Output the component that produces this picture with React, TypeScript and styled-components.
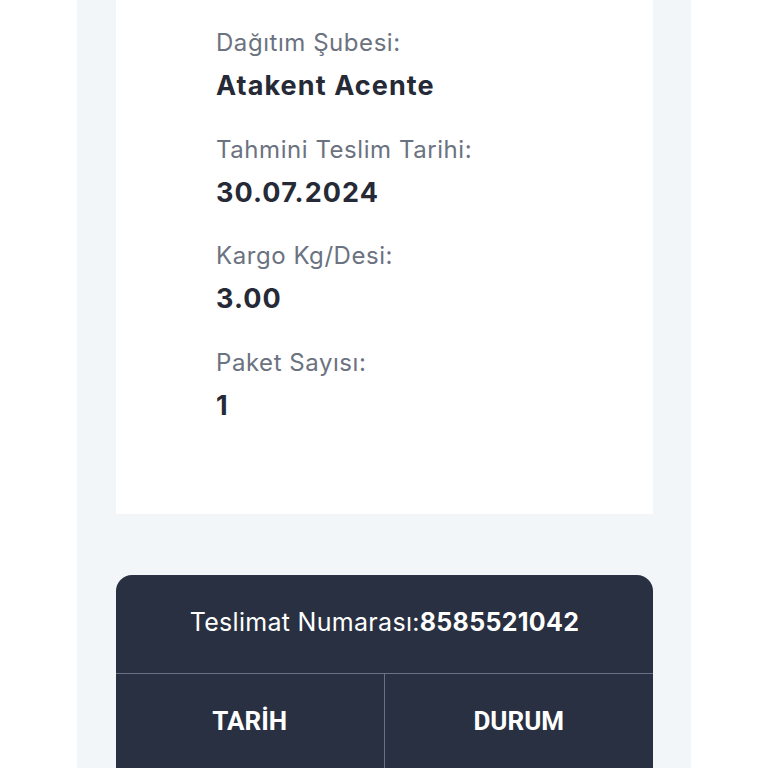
import React from "react";
import styled, { createGlobalStyle } from "styled-components";

const Global = createGlobalStyle`
  html, body {
    margin: 0;
    padding: 0;
    background: #ffffff;
  }
  body {
    font-family: "Inter", "Noto Sans", sans-serif;
    -webkit-font-smoothing: antialiased;
  }
  * { box-sizing: border-box; }
`;

const Page = styled.div`
  display: flex;
  padding-left: 77px;
  height: 768px;
  overflow: hidden;
`;

const Panel = styled.div`
  width: 614px;
  background: #f3f6f9;
  padding: 0 38px 0 39px;
  display: flex;
  flex-direction: column;
  gap: 61px;
`;

const InfoCard = styled.section`
  background: #ffffff;
  padding: 28px 24px 91px 100px;
  display: flex;
  flex-direction: column;
  gap: 31.5px;
`;

const Field = styled.div`
  display: flex;
  flex-direction: column;
  gap: 11px;
`;

const Label = styled.div`
  font-size: 24px;
  line-height: 30px;
  letter-spacing: 0.55px;
  color: #6b7280;
  font-weight: 400;
`;

const Value = styled.div`
  font-size: 27px;
  line-height: 34px;
  letter-spacing: 1.1px;
  color: #252a36;
  font-weight: 700;
`;

const TrackCard = styled.section`
  background: #283041;
  border-radius: 16px 16px 0 0;
  color: #ffffff;
  flex: 1;
  display: flex;
  flex-direction: column;
`;

const TrackHeader = styled.div`
  height: 99px;
  display: flex;
  align-items: center;
  justify-content: center;
  padding-bottom: 4px;
  font-size: 25px;
  letter-spacing: 0.3px;
  border-bottom: 1px solid #687185;
`;

const Number = styled.span`
  font-weight: 700;
`;

const Columns = styled.div`
  display: grid;
  grid-template-columns: 1fr 1fr;
  flex: 1;
`;

const Column = styled.div<{ $divider?: boolean }>`
  display: flex;
  flex-direction: column;
  border-right: ${(p) => (p.$divider ? "1px solid #687185" : "none")};
`;

const ColHead = styled.div`
  height: 94px;
  display: flex;
  align-items: center;
  justify-content: center;
  font-family: "Roboto", "Inter", sans-serif;
  font-weight: 700;
  font-size: 26px;
`;

const fields = [
  { label: "Dağıtım Şubesi:", value: "Atakent Acente" },
  { label: "Tahmini Teslim Tarihi:", value: "30.07.2024" },
  { label: "Kargo Kg/Desi:", value: "3.00" },
  { label: "Paket Sayısı:", value: "1" },
];

export default function App() {
  return (
    <>
      <Global />
      <Page>
        <Panel>
          <InfoCard>
            {fields.map((f) => (
              <Field key={f.label}>
                <Label>{f.label}</Label>
                <Value>{f.value}</Value>
              </Field>
            ))}
          </InfoCard>
          <TrackCard>
            <TrackHeader>
              Teslimat Numarası:<Number>8585521042</Number>
            </TrackHeader>
            <Columns>
              <Column $divider>
                <ColHead>TARİH</ColHead>
              </Column>
              <Column>
                <ColHead>DURUM</ColHead>
              </Column>
            </Columns>
          </TrackCard>
        </Panel>
      </Page>
    </>
  );
}
